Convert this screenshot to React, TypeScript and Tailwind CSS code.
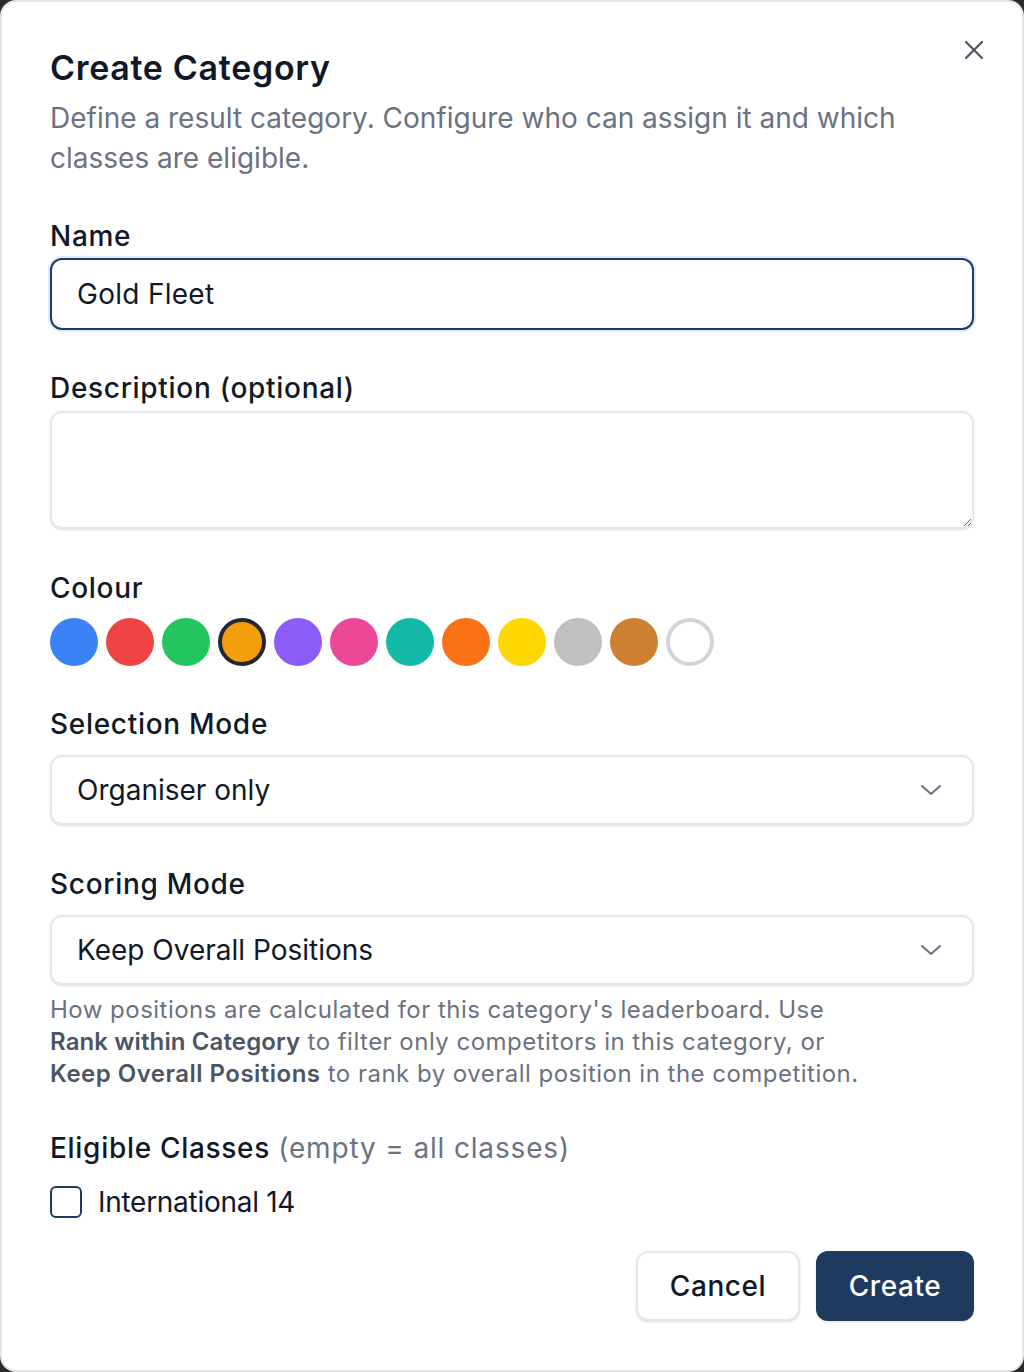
import React, { useState } from 'react';

const COLOURS = [
  '#3b82f6',
  '#ef4444',
  '#22c55e',
  '#f59e0b',
  '#8b5cf6',
  '#ec4899',
  '#14b8a6',
  '#f97316',
  '#ffd700',
  '#c0c0c0',
  '#cd7f32',
  '#ffffff',
];

function Chevron() {
  return (
    <svg width="22" height="12" viewBox="0 0 22 12" fill="none" className="shrink-0">
      <path d="M2 2l9 8 9-8" stroke="#6b7280" strokeWidth="2" strokeLinecap="round" strokeLinejoin="round" />
    </svg>
  );
}

function SelectBox({ value }: { value: string }) {
  return (
    <div className="flex h-[70px] items-center justify-between rounded-xl border-2 border-[#e5e7eb] bg-white pl-[25px] pr-[30px] shadow-sm">
      <span className="text-[28px] leading-10 text-[#111827]">{value}</span>
      <Chevron />
    </div>
  );
}

export default function App() {
  const [colour, setColour] = useState('#f59e0b');
  const [checked, setChecked] = useState(false);

  return (
    <div className="h-[1372px] w-[1024px] bg-[#2b2b2b]" style={{ fontFamily: 'Inter, "Noto Sans", sans-serif' }}>
      <div className="relative h-full w-full rounded-2xl border-2 border-[#e2e4e8] bg-white px-[48px] pt-[46px]">
        {/* Close */}
        <button className="absolute right-[38px] top-[38px] p-0">
          <svg width="20" height="20" viewBox="0 0 20 20" fill="none">
            <path d="M2 2l16 16M18 2L2 18" stroke="#4b5563" strokeWidth="2.2" strokeLinecap="round" />
          </svg>
        </button>

        {/* Header */}
        <h2 className="text-[34px] font-semibold leading-10 tracking-[0.02em] text-[#111827]">Create Category</h2>
        <p className="mt-[10px] pr-[40px] text-[28px] leading-10 text-[#6b7280]">
          Define a result category. Configure who can assign it and which classes are eligible.
        </p>

        {/* Name */}
        <label className="mt-[38px] block text-[28px] font-medium leading-10 tracking-[0.025em] text-[#111827]">
          Name
        </label>
        <div className="mt-[2px] flex h-[72px] items-center rounded-xl border-2 border-[#1e3a5f] bg-white px-[25px] shadow-[0_0_0_2px_#dbeafe]">
          <span className="text-[28px] leading-10 tracking-[0.01em] text-[#111827]">Gold Fleet</span>
        </div>

        {/* Description */}
        <label className="mt-[38px] block text-[28px] font-medium leading-10 tracking-[0.025em] text-[#111827]">
          Description (optional)
        </label>
        <textarea className="mt-[3px] block h-[118px] w-full resize-y rounded-xl border-2 border-[#e5e7eb] bg-white px-[26px] py-3 text-[28px] shadow-sm outline-none" />

        {/* Colour */}
        <label className="mt-[39px] block text-[28px] font-medium leading-10 tracking-[0.025em] text-[#111827]">
          Colour
        </label>
        <div className="mt-[10px] flex gap-2">
          {COLOURS.map((c) => (
            <button
              key={c}
              onClick={() => setColour(c)}
              className={`h-12 w-12 rounded-full ${
                colour === c
                  ? 'border-4 border-[#1f2937]'
                  : c === '#ffffff'
                  ? 'border-4 border-[#d1d5db]'
                  : ''
              }`}
              style={{ backgroundColor: c }}
            />
          ))}
        </div>

        {/* Selection Mode */}
        <label className="mt-[38px] block text-[28px] font-medium leading-10 tracking-[0.025em] text-[#111827]">
          Selection Mode
        </label>
        <div className="mt-[11px]">
          <SelectBox value="Organiser only" />
        </div>

        {/* Scoring Mode */}
        <label className="mt-[39px] block text-[28px] font-medium leading-10 tracking-[0.025em] text-[#111827]">
          Scoring Mode
        </label>
        <div className="mt-[11px]">
          <SelectBox value="Keep Overall Positions" />
        </div>
        <p className="mt-[9px] text-[24px] leading-8 tracking-[0.02em] text-[#6b7280]">
          How positions are calculated for this category's leaderboard. Use
          <br />
          <strong className="font-semibold tracking-[0.005em] text-[#4b5563]">Rank within Category</strong> to filter
          only competitors in this category, or
          <br />
          <strong className="font-semibold tracking-[0.02em] text-[#4b5563]">Keep Overall Positions</strong> to rank by
          overall position in the competition.
        </p>

        {/* Eligible Classes */}
        <label className="mt-[38px] block text-[28px] font-medium leading-10 tracking-[0.025em] text-[#111827]">
          Eligible Classes <span className="font-normal tracking-[0.03em] text-[#6b7280]">(empty = all classes)</span>
        </label>
        <label className="mt-[14px] flex items-center gap-4">
          <button
            onClick={() => setChecked(!checked)}
            className="h-8 w-8 rounded-md border-2 border-[#1e3a5f] bg-white"
          />
          <span className="text-[28px] leading-10 tracking-[-0.01em] text-[#111827]">International 14</span>
        </label>

        {/* Footer */}
        <div className="mt-[29px] flex justify-end gap-4">
          <button className="h-[70px] w-[164px] rounded-xl border-2 border-[#e5e7eb] bg-white text-[28px] font-medium tracking-[0.02em] text-[#111827] shadow-sm">
            Cancel
          </button>
          <button className="h-[70px] w-[158px] rounded-xl bg-[#1e3a5f] text-[28px] font-medium tracking-[0.02em] text-white shadow-sm">
            Create
          </button>
        </div>
      </div>
    </div>
  );
}
